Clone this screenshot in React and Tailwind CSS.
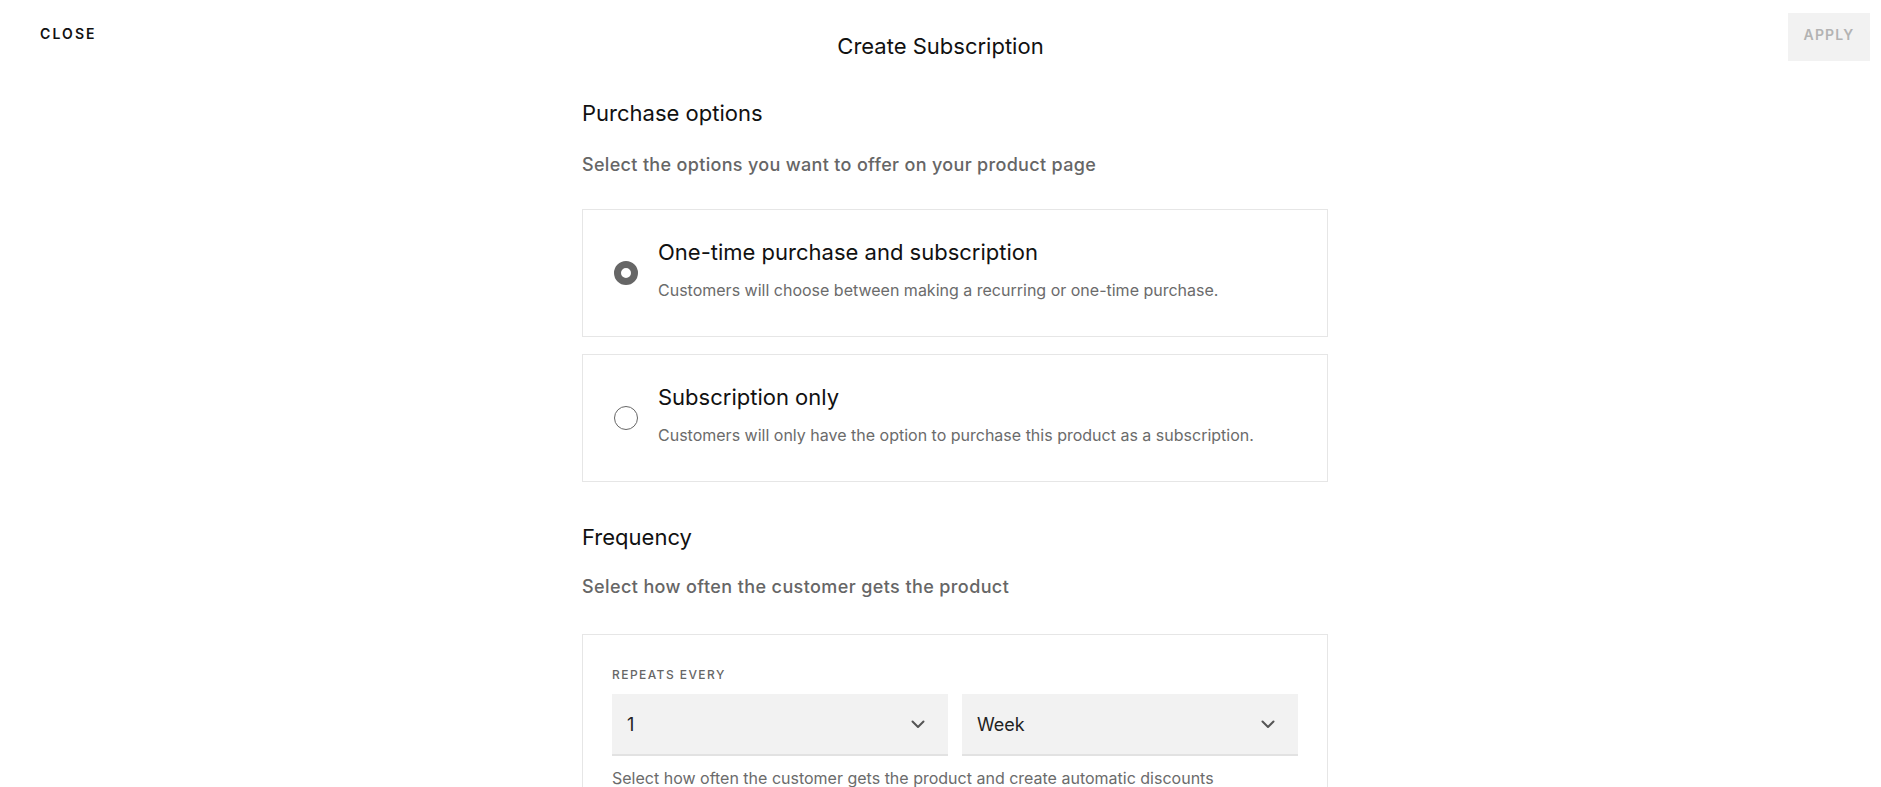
const Chevron = () => (
  <svg width="14" height="9" viewBox="0 0 14 9" fill="none" className="shrink-0">
    <polyline points="1.5,1.5 7,7 12.5,1.5" stroke="#555" strokeWidth="2" strokeLinecap="round" strokeLinejoin="round" />
  </svg>
);

const Option = ({ checked, title, desc, className = "" }) => (
  <div className={`flex items-center border border-[#e6e6e6] pl-[31px] pr-6 ${className}`}>
    {checked ? (
      <span className="w-6 h-6 rounded-full border-[7px] border-[#666] shrink-0" />
    ) : (
      <span className="w-6 h-6 rounded-full border border-[#666] shrink-0" />
    )}
    <div className="ml-5 pt-[27px] pb-[34px]">
      <div className="text-[22px] leading-[30px] text-[#111]">{title}</div>
      <div className="mt-[11px] text-[16px] leading-6 text-[#6b6b6b]">{desc}</div>
    </div>
  </div>
);

const Select = ({ value }) => (
  <div className="flex items-center justify-between h-[62px] bg-[#f2f2f2] border-b-2 border-[#e2e2e2] pl-[15px] pr-[23px]">
    <span className="text-[18px] text-[#222]">{value}</span>
    <Chevron />
  </div>
);

export default function App() {
  return (
    <div className="min-h-screen bg-white font-['Inter',sans-serif] antialiased">
      <header className="grid grid-cols-[1fr_auto_1fr] items-start pt-[13px]">
        <button className="justify-self-start mt-[11px] ml-10 text-[14px] leading-5 font-semibold tracking-[0.15em] text-[#111]">
          CLOSE
        </button>
        <h1 className="mt-[19px] text-[22px] leading-7 text-[#111]">Create Subscription</h1>
        <button className="justify-self-end mr-[11px] h-12 w-[82px] pb-[6px] bg-[#f2f2f2] text-[14px] font-semibold tracking-[0.08em] text-[#b3b3b3]">
          APPLY
        </button>
      </header>

      <main className="flex justify-center pl-[29px]">
        <div className="w-[746px] mt-[38px]">
          <h2 className="text-[22px] leading-7 text-[#111]">Purchase options</h2>
          <p className="mt-[26px] text-[18px] leading-6 font-medium tracking-[0.018em] text-[#666]">
            Select the options you want to offer on your product page
          </p>

          <Option
            className="mt-[32px]"
            checked
            title="One-time purchase and subscription"
            desc="Customers will choose between making a recurring or one-time purchase."
          />
          <Option
            className="mt-[17px]"
            title="Subscription only"
            desc="Customers will only have the option to purchase this product as a subscription."
          />

          <h2 className="mt-[41px] text-[22px] leading-7 text-[#111]">Frequency</h2>
          <p className="mt-6 text-[18px] leading-6 font-medium tracking-[0.022em] text-[#666]">
            Select how often the customer gets the product
          </p>

          <div className="mt-[35px] border border-[#e6e6e6] px-[29px] pt-[32px] pb-8">
            <div className="text-[12px] leading-4 font-medium tracking-[0.12em] text-[#666]">REPEATS EVERY</div>
            <div className="mt-[11px] grid grid-cols-2 gap-[14px]">
              <Select value="1" />
              <Select value="Week" />
            </div>
            <p className="mt-[10px] text-[16px] leading-6 text-[#6b6b6b]">
              Select how often the customer gets the product and create automatic discounts
            </p>
          </div>
        </div>
      </main>
    </div>
  );
}
